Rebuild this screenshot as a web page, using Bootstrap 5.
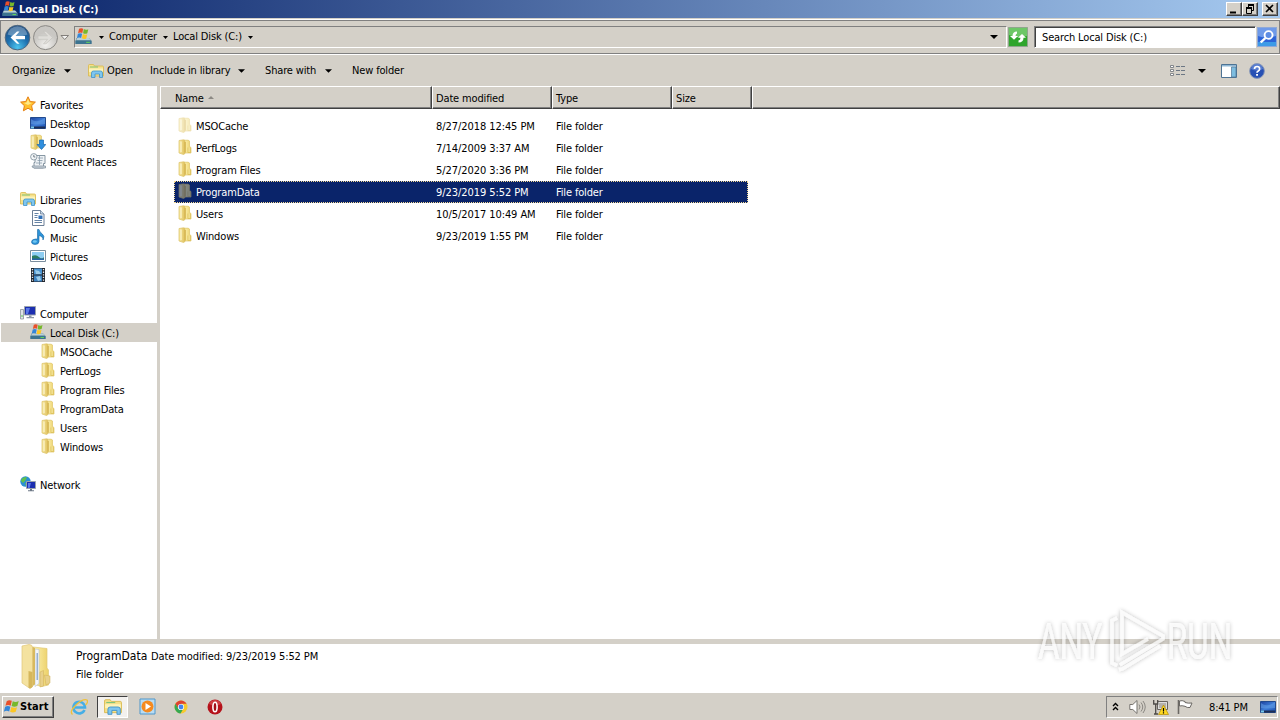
<!DOCTYPE html>
<html lang="en">
<head>
    <meta charset="UTF-8">
    <meta name="viewport" content="width=device-width, initial-scale=1.0">
    <title>Local Disk (C:)</title>
    <link rel="stylesheet" href="https://cdn.jsdelivr.net/npm/bootstrap@5.3.0/dist/css/bootstrap.min.css">
    <style>
        body {
            width: 1280px;
            height: 720px;
            overflow: hidden;
            background: #d4d0c8;
            color: #000;
            font-family: "DejaVu Sans Condensed", "DejaVu Sans", sans-serif;
            font-stretch: condensed;
            font-size: 11px;
            line-height: 14px;
            letter-spacing: -0.15px;
            white-space: nowrap;
        }
        svg { display: block; flex: none; }
        .titlebar {
            height: 18px;
            margin-bottom: 1px;
            padding: 0 2px;
            color: #fff;
            font-weight: bold;
            letter-spacing: -0.05px;
            background: linear-gradient(90deg, #0a246a, #a6caf0);
        }
        .title-text { padding: 1px 0 0 1px; }
        .win-btn {
            width: 16px;
            height: 14px;
            background: #d4d0c8;
            border: 1px solid;
            border-color: #fff #404040 #404040 #fff;
            box-shadow: inset -1px -1px #808080;
        }
        .address-row {
            height: 36px;
            padding: 0 2px 0 4px;
            border-top: 1px solid #fff;
            border-bottom: 1px solid #fff;
            box-shadow: inset 1px 1px #808080, inset -1px -1px #808080;
        }
        .sunken {
            height: 22px;
            border: 1px solid;
            border-color: #808080 #fff #fff #808080;
        }
        .crumbs { width: 933px; margin-left: 4px; }
        .crumbs .cr-1 { margin-left: 7px; }
        .crumb-pc { width: 54px; margin-left: 5px; }
        .crumb-disk { width: 75px; margin-left: 5px; }
        .refresh { margin-left: 1px; }
        .search-box {
            width: 222px;
            margin-left: 6px;
            padding: 2px 0 0 7px;
            background: #fff;
            box-shadow: inset 1px 1px #404040;
        }
        .search-btn { margin-left: 1px; }
        .toolbar { height: 31px; padding: 0 15px 0 12px; }
        .tb-organize { width: 52px; }
        .tb-icon { margin-left: 17px; }
        .tb-open { width: 43px; margin-left: 3px; }
        .tb-include { width: 88px; }
        .tb-share { width: 60px; margin-left: 20px; }
        .tb-new { margin-left: 20px; }
        .tb-preview { margin: 0 12px 0 15px; }
        .tb-views { margin-right: 12px; }
        .main-area { height: 553px; background: #fff; }
        .side {
            width: 160px;
            padding-top: 9px;
            border-right: 3px solid #d4d0c8;
        }
        .side-item { height: 19px; gap: 4px; padding: 2px 0 0 20px; }
        .side-item svg { margin-top: -3px; }
        .side-item.lv1 { padding-left: 30px; }
        .side-item.lv2 { padding-left: 40px; }
        .side-item.current { background: #d4d0c8; margin-left: 1px; padding-left: 29px; }
        .side-gap { height: 19px; }
        .heads { height: 23px; background: #d4d0c8; }
        .head-cell {
            padding: 2px 3px 0;
            border: 1px solid;
            border-color: #fff #404040 #404040 #fff;
            box-shadow: inset -1px -1px #808080;
        }
        .c-name { width: 272px; padding-left: 14px; }
        .c-mid { width: 120px; }
        .c-size { width: 80px; }
        .files { padding: 6px 0 0 14px; }
        .file-row { width: 574px; height: 22px; padding-top: 2px; }
        .file-row svg { margin-top: -4px; }
        .file-row .f-name { width: 262px; gap: 3px; padding-left: 3px; }
        .file-row .f-date { width: 120px; letter-spacing: -0.07px; }
        .file-row.picked {
            background: #0a246a;
            color: #fff;
            outline: 1px dotted #f5db95;
            outline-offset: -1px;
        }
        .splitter { height: 5px; background: #d4d0c8; }
        .details { height: 48px; background: #fff; padding-left: 20px; }
        .details-text { line-height: 18px; padding: 4px 0 0 20px; letter-spacing: -0.1px; }
        .d-name { font-size: 12px; line-height: 17px; width: 75px; letter-spacing: 0; }
        .taskbar { height: 28px; padding: 0 2px; border-top: 1px solid #fff; }
        .start-btn {
            width: 52px;
            height: 22px;
            font-weight: bold;
            letter-spacing: 0.1px;
            background: #d4d0c8;
            border: 1px solid;
            border-color: #fff #404040 #404040 #fff;
            box-shadow: inset -1px -1px #808080;
        }
        .start-btn span { padding-top: 1px; }
        .task-on {
            width: 31px;
            height: 22px;
            margin-left: 9px;
            background: #f3f1ee;
            border: 1px solid;
            border-color: #404040 #fff #fff #404040;
        }
        .task-ie { margin-left: 16px; }
        .task-wmp { margin-left: 11px; }
        .task-chrome { margin-left: 18px; }
        .task-opera { margin-left: 19px; }
        .tray { width: 172px; padding-left: 5px; }
        .tray-vol { margin-left: 10px; }
        .tray-net { margin-left: 7px; }
        .tray-flag { margin-left: 8px; }
        .tray-time { width: 51px; margin-left: 16px; padding-top: 2px; }
        .watermark { position: absolute; left: 1030px; top: 602px; overflow: visible; }
        .watermark text { font-family: Roboto, sans-serif; font-stretch: normal; font-size: 50px; letter-spacing: 0; }
    </style>
</head>
<body>
    <svg width="0" height="0" class="position-absolute">
        <defs>
            <linearGradient id="gold"><stop offset="0" stop-color="#fdf3b4"/><stop offset="1" stop-color="#ecd068"/></linearGradient>
            <linearGradient id="flap"><stop offset="0" stop-color="#f7e9a4"/><stop offset="1" stop-color="#dfc05a"/></linearGradient>
            <linearGradient id="screen" x2="1" y2="1"><stop offset="0" stop-color="#1c3f9c"/><stop offset=".5" stop-color="#3d7bd6"/><stop offset="1" stop-color="#1b4fae"/></linearGradient>
            <radialGradient id="orb" cx=".5" cy=".9" r=".9"><stop offset="0" stop-color="#4cc4ee"/><stop offset=".5" stop-color="#1d6fae"/><stop offset="1" stop-color="#1b4a80"/></radialGradient>
            <radialGradient id="orbOff" cx=".5" cy=".8"><stop offset="0" stop-color="#f2f1ef"/><stop offset="1" stop-color="#c9c7c3"/></radialGradient>
            <symbol id="flag" viewBox="0 0 16 16">
                <path d="M3.500 3q2.200-1.800 4.800-.3L7.200 7.200Q4.700 5.800 2.300 7.400z" fill="#e8502a"/>
                <path d="M9.200 3.100q2.600 1.500 5.600-.2l-1.300 4.600q-2.800 1.500-5.400 0z" fill="#77b82c"/>
                <path d="M2 8.300q2.500-1.500 4.900-.1L5.800 12.700Q3.300 11.300.8 12.900z" fill="#3386d8"/>
                <path d="M7.900 8.500q2.600 1.500 5.300.1L12 13q-2.700 1.500-5.300 0z" fill="#fbc624"/>
            </symbol>
            <symbol id="disk" viewBox="0 0 16 16">
                <path d="M1.500 9.500h11.500l2.500 2.500v3H.5v-3z" fill="#4f7f94"/>
                <path d="M2 9.500h11l2 2H1z" fill="#b9d0d8"/>
                <path d="M.5 12H15.500v3H.5z" fill="#3c7390"/>
                <path d="M10.500 13h3.500v1h-3.500z" fill="#62d15c"/>
                <path d="M3.800.8q2-1.200 3.900 0L6.900 4.700q-2-1-4 .2z" fill="#e8502a"/>
                <path d="M8.300 1q2 1.200 4.200.1l-.9 3.900q-2 1-4-.1z" fill="#77b82c"/>
                <path d="M2.700 5.500q2-1.200 4 0l-.9 4q-2-1-4 .1z" fill="#3386d8"/>
                <path d="M7.400 5.700q2 1.200 4.100.1l-.9 4q-2 1-4-.1z" fill="#fbc624"/>
            </symbol>
            <symbol id="folder" viewBox="0 0 16 16">
                <path d="M7 1.200Q12.500.8 12.500 2v5.500l1.500 1V14H7z" fill="url(#gold)" stroke="#dfc66a" stroke-width=".7"/>
                <path d="M2 1.500L6.500.8q1.500 0 1.500 1.500v12.200l-1.500 1L2 14z" fill="url(#flap)" stroke="#dcc266" stroke-width=".7"/>
                <path d="M8.200 3v10.500" stroke="#c9a23a" stroke-width=".8"/>
                <path d="M11 8.500v5h2.300V8.800" fill="#f6e69a" stroke="#d8bb55" stroke-width=".7"/>
                <path d="M4 2.500v10.500" stroke="#fdf6cf" stroke-width="1.200"/>
            </symbol>
            <symbol id="library" viewBox="0 0 16 16">
                <path d="M.5 2.500q0-1 1-1h4l1 1.500h8q1 0 1 1V13H.5z" fill="#f5e08a" stroke="#d8b84d" stroke-width=".8"/>
                <path d="M2 3.500h8v1H2z" fill="#7cc47d"/>
                <path d="M1 5.500h14V9H1z" fill="#fdf3b8"/>
                <path d="M3.500 14.500V10q0-2 2-2h7q2 0 2 2v4.500h-3V11h-4.500v3.500z" fill="#7fc6ef" stroke="#3f92c8" stroke-width=".8"/>
            </symbol>
            <symbol id="star" viewBox="0 0 16 16">
                <path d="M8 .8l2.200 4.700 5.200.6-3.800 3.600 1 5.100L8 12.200l-4.600 2.600 1-5.100L.6 6.100l5.200-.6z" fill="#ffc02e" stroke="#e57f14"/>
                <path d="M8 3l1.400 3.500L12 7 8 9 4 7l2.600-.5z" fill="#ffea8a"/>
            </symbol>
            <symbol id="desktop" viewBox="0 0 16 16">
                <path d="M.5 2.500h15v11H.5z" fill="url(#screen)" stroke="#234a8e"/>
                <path d="M1 4q6 5 14-1v6Q8 10 1 9z" fill="#6aa5ea" opacity=".5"/>
                <path d="M1 11.500h14v2H1z" fill="#1d2e55"/><path d="M1 11.500h3v2H1z" fill="#77c8ee"/>
            </symbol>
            <symbol id="download" viewBox="0 0 16 16">
                <use href="#folder" x="-1" width="16" height="16"/>
                <path d="M9.500 6h4v4.500h2.300L11.500 15.500 7 10.500h2.500z" fill="#2f8fdf" stroke="#1767b0" stroke-width=".7"/>
            </symbol>
            <symbol id="recent" viewBox="0 0 16 16">
                <path d="M5 2.500h10v8h-1.500V15H4V9.500h1z" fill="#eef2f5" stroke="#7b8b98" stroke-width=".9"/>
                <path d="M8 5h5M7.500 7.500h5M6 10h6M9.500 3v9" stroke="#8a9cab" stroke-width=".8"/>
                <circle cx="3.800" cy="3.800" r="3.200" fill="#f3f6f8" stroke="#8897a3" stroke-width=".9"/>
                <path d="M3.800 2v2h1.500" fill="none" stroke="#53616d" stroke-width=".8"/>
                <path d="M2 13q0 2 2.500 2H15.500v-2z" fill="#cbd5dc" stroke="#7b8b98" stroke-width=".7"/>
            </symbol>
            <symbol id="doc" viewBox="0 0 16 16">
                <path d="M2.500.5h8l3.500 3.500v11.500H2.500z" fill="#fff" stroke="#5b718b" stroke-width=".9"/>
                <path d="M10.500.5V4H14" fill="#c9d9e8" stroke="#5b718b" stroke-width=".7"/>
                <path d="M4.500 3.500h4M4.500 5.500h3M4.500 7.500h3M4.500 10.500h7.500M4.500 12.500h7.500" stroke="#6583a6"/>
                <path d="M8.500 5.500h4v3.500h-4z" fill="#2f6fb7"/>
            </symbol>
            <symbol id="music" viewBox="0 0 16 16">
                <path d="M7.500.5h1.500q.5 2.500 3 4.200 3.300 2.300 1 6.300.3-3.500-4-4.500v6q0 3-4 3-3.500-.1-3.500-2.500 0-2.700 4-3h2z" fill="#2d93d8" stroke="#1667a5" stroke-width=".6"/>
                <ellipse cx="4.800" cy="12.500" rx="2" ry="1.300" fill="#70c7f2"/>
            </symbol>
            <symbol id="picture" viewBox="0 0 16 16">
                <path d="M.5 2.500h15v11H.5z" fill="#fff" stroke="#7b8e9e"/>
                <path d="M2 4h12v8H2z" fill="#8ecdf2"/><path d="M2 8q4-2 7 1t5 0v3H2z" fill="#2d7d62"/><path d="M2 10.500h12V12H2z" fill="#2864a8"/>
            </symbol>
            <symbol id="video" viewBox="0 0 16 16">
                <path d="M1 1h14v14H1z" fill="#20252d"/>
                <path d="M4 1.500h8v6H4z" fill="#4a93cf"/><path d="M4 8.500h8v6H4z" fill="#3e83c0"/>
                <path d="M5 3l4 1 2 3H6zM6 10l4-1 1 4-3 1z" fill="#9bcce9"/>
                <path d="M2.500 2v13M13.500 2v13" stroke="#e9edf2" stroke-width="1.300" stroke-dasharray="1.300 1.300"/>
            </symbol>
            <symbol id="pc" viewBox="0 0 16 16">
                <path d="M.5 4.500h3v9.500h-3z" fill="#dfe3e6" stroke="#8c949b" stroke-width=".8"/><path d="M1.500 10h1v2h-1z" fill="#5cc94e"/>
                <path d="M4.500 1.500h11v8.500h-11z" fill="#1c2fb0" stroke="#9aa3ad"/>
                <path d="M6 3h4l-2 6H6z" fill="#5a78e8"/><path d="M9 10.500h2.500V12H14v1.200H6.500V12H9z" fill="#8d98a6"/>
            </symbol>
            <symbol id="network" viewBox="0 0 16 16">
                <circle cx="5.500" cy="5.500" r="5.200" fill="#2b8fd3"/>
                <path d="M2 2.500Q5 0 7 1.500L5 5 3 7 .8 4.800zM5 7l3 1-2 2.600z" fill="#5fc04e"/>
                <path d="M6.500 5.500h9v7h-9z" fill="#1c2fb0" stroke="#9aa3ad"/>
                <path d="M8 7h3l-1.500 5H8z" fill="#5a78e8"/><path d="M10 13h2v1.200h2v1H8v-1h2z" fill="#6d7886"/>
            </symbol>
            <symbol id="caret" viewBox="0 0 8 4"><path d="M0 0h8L4 4z"/></symbol>
        </defs>
    </svg>

    <div class="titlebar d-flex align-items-center">
        <svg width="16" height="16"><use href="#disk"/></svg>
        <span class="title-text me-auto">Local Disk (C:)</span>
        <div class="d-flex">
            <div class="win-btn"><svg width="14" height="12"><path d="M3 8.500h6v2H3z"/></svg></div>
            <div class="win-btn me-1"><svg width="14" height="12"><path d="M5 2h6M3 5h6" stroke="#000" stroke-width="2"/><path d="M5.500 2v3M10.500 2v5.500H9M3.500 5v5.500h5V5" fill="none" stroke="#000"/></svg></div>
            <div class="win-btn"><svg width="14" height="12"><path d="M3 2l7 7M10 2L3 9" stroke="#000" stroke-width="1.600"/></svg></div>
        </div>
    </div>

    <div class="address-row d-flex align-items-center">
        <svg width="66" height="30" viewBox="0 0 66 30">
            <circle cx="13.500" cy="15.600" r="12.300" fill="url(#orb)" stroke="#51687e"/>
            <path d="M3.500 12.500q2-8 10-8.300 8 .3 10 8.300-10 4-20 0z" fill="#fff" opacity=".3"/>
            <path d="M6.500 15.600l6.500-6.200h2.500l-4 4.500h9.500v3.400h-9.500l4 4.500H13z" fill="#fff"/>
            <circle cx="41.500" cy="15.600" r="12" fill="url(#orbOff)" stroke="#8b8985"/>
            <path d="M48.500 15.600L42 9.400h-2.500l4 4.500H34v3.400h9.500l-4 4.500H42z" fill="#dfddd9" stroke="#c3c1bc" stroke-width=".6"/>
            <path d="M57 13.500h7.500L60.700 17.500z" fill="#f4f3f1" stroke="#77746f" stroke-width=".9"/>
        </svg>
        <div class="sunken crumbs d-flex align-items-center">
            <svg width="17" height="18"><use href="#disk" width="17" height="17"/></svg>
            <svg class="cr-1" width="5" height="3" viewBox="0 0 5 3"><path d="M0 0h5L2.500 3z"/></svg>
            <span class="crumb-pc">Computer</span>
            <svg width="5" height="3" viewBox="0 0 5 3"><path d="M0 0h5L2.500 3z"/></svg>
            <span class="crumb-disk">Local Disk (C:)</span>
            <svg width="5" height="3" viewBox="0 0 5 3"><path d="M0 0h5L2.500 3z"/></svg>
            <svg class="ms-auto me-2" width="8" height="4"><use href="#caret"/></svg>
        </div>
        <svg class="refresh" width="20" height="20" viewBox="0 0 20 20">
            <path d="M.5.500h19v19H.5z" fill="#2fa52c" stroke="#8fa68d"/><path d="M1 1h18v8Q9 12 1 8z" fill="#8fd987" opacity=".65"/>
            <path d="M2 9h2.500Q4.500 4.500 9 4.500v2Q7.500 7 7.500 9H10L6 12.800zM18 10.800h-2.500q0 4.700-5 4.700v-2q2-.3 2-2.700H10L14 7z" fill="#fff"/>
        </svg>
        <div class="sunken search-box d-flex align-items-center">Search Local Disk (C:)</div>
        <svg class="search-btn" width="20" height="20" viewBox="0 0 19 20" preserveAspectRatio="none">
            <path d="M.5.500h18v19H.5z" fill="#2c63d8" stroke="#8fa9d8"/><path d="M1 1h17v8Q9 12 1 9z" fill="#9cc0f5" opacity=".6"/><path d="M1 15h17v4H1z" fill="#49c2f2" opacity=".6"/>
            <circle cx="11" cy="8" r="3.800" fill="#5d8ce4" stroke="#fff" stroke-width="1.800"/><path d="M8 11l-4.500 4.500" stroke="#fff" stroke-width="2.400"/>
        </svg>
    </div>

    <div class="toolbar d-flex align-items-center">
        <span class="tb-organize">Organize</span>
        <svg width="7" height="4"><use href="#caret"/></svg>
        <svg class="tb-icon" width="16" height="16"><use href="#library"/></svg>
        <span class="tb-open">Open</span>
        <span class="tb-include">Include in library</span>
        <svg width="7" height="4"><use href="#caret"/></svg>
        <span class="tb-share">Share with</span>
        <svg width="7" height="4"><use href="#caret"/></svg>
        <span class="tb-new">New folder</span>
        <div class="d-flex align-items-center ms-auto">
            <svg class="tb-views" width="16" height="14" viewBox="0 0 16 14"><path d="M.5 1.500h3v2h-3zM.5 5.500h3v2h-3zM.5 9.500h3v2h-3z" fill="#fff" stroke="#777b80" stroke-width=".9"/><path d="M6 2.500h4M11 2.500h4M6 6.500h4M11 6.500h4M6 10.500h4M11 10.500h4" stroke="#6c7784" stroke-width="1.200"/></svg>
            <svg width="8" height="4"><use href="#caret"/></svg>
            <svg class="tb-preview" width="16" height="14" viewBox="0 0 16 14"><path d="M.5.500h15v13H.5z" fill="#fff" stroke="#4d7394"/><path d="M1 1h14v1.500H1z" fill="#8fb7d4"/><path d="M10.500 3h4.500v10h-4.500z" fill="#7dbde0" stroke="#4d7394" stroke-width=".7"/></svg>
            <svg width="16" height="16" viewBox="0 0 16 16"><circle cx="8" cy="8" r="7.400" fill="#2750b4" stroke="#8b9ab8"/><path d="M2 6q1-5 6-5t6 5Q8 9 2 6z" fill="#88a7ea" opacity=".5"/><path d="M5.500 6q0-2.500 2.600-2.500T10.600 6q0 1.300-1.300 2T8 9.800" fill="none" stroke="#fff" stroke-width="1.700"/><path d="M7.100 11h1.900v1.800H7.100z" fill="#fff"/></svg>
        </div>
    </div>

    <div class="main-area d-flex">
        <div class="side">
            <div class="side-item d-flex align-items-center"><svg width="16" height="16"><use href="#star"/></svg>Favorites</div>
            <div class="side-item lv1 d-flex align-items-center"><svg width="16" height="16"><use href="#desktop"/></svg>Desktop</div>
            <div class="side-item lv1 d-flex align-items-center"><svg width="16" height="16"><use href="#download"/></svg>Downloads</div>
            <div class="side-item lv1 d-flex align-items-center"><svg width="16" height="16"><use href="#recent"/></svg>Recent Places</div>
            <div class="side-gap"></div>
            <div class="side-item d-flex align-items-center"><svg width="16" height="16"><use href="#library"/></svg>Libraries</div>
            <div class="side-item lv1 d-flex align-items-center"><svg width="16" height="16"><use href="#doc"/></svg>Documents</div>
            <div class="side-item lv1 d-flex align-items-center"><svg width="16" height="16"><use href="#music"/></svg>Music</div>
            <div class="side-item lv1 d-flex align-items-center"><svg width="16" height="16"><use href="#picture"/></svg>Pictures</div>
            <div class="side-item lv1 d-flex align-items-center"><svg width="16" height="16"><use href="#video"/></svg>Videos</div>
            <div class="side-gap"></div>
            <div class="side-item d-flex align-items-center"><svg width="16" height="16"><use href="#pc"/></svg>Computer</div>
            <div class="side-item current d-flex align-items-center"><svg width="16" height="16"><use href="#disk"/></svg>Local Disk (C:)</div>
            <div class="side-item lv2 d-flex align-items-center"><svg width="16" height="16"><use href="#folder"/></svg>MSOCache</div>
            <div class="side-item lv2 d-flex align-items-center"><svg width="16" height="16"><use href="#folder"/></svg>PerfLogs</div>
            <div class="side-item lv2 d-flex align-items-center"><svg width="16" height="16"><use href="#folder"/></svg>Program Files</div>
            <div class="side-item lv2 d-flex align-items-center"><svg width="16" height="16"><use href="#folder"/></svg>ProgramData</div>
            <div class="side-item lv2 d-flex align-items-center"><svg width="16" height="16"><use href="#folder"/></svg>Users</div>
            <div class="side-item lv2 d-flex align-items-center"><svg width="16" height="16"><use href="#folder"/></svg>Windows</div>
            <div class="side-gap"></div>
            <div class="side-item d-flex align-items-center"><svg width="16" height="16"><use href="#network"/></svg>Network</div>
        </div>
        <div class="flex-grow-1">
            <div class="heads d-flex">
                <div class="head-cell c-name d-flex align-items-center">Name<svg class="ms-1 mb-1" width="7" height="4" viewBox="0 0 7 4"><path d="M0 4h6L3 1z" fill="#8c8984"/></svg></div>
                <div class="head-cell c-mid d-flex align-items-center">Date modified</div>
                <div class="head-cell c-mid d-flex align-items-center">Type</div>
                <div class="head-cell c-size d-flex align-items-center">Size</div>
                <div class="head-cell flex-grow-1"></div>
            </div>
            <div class="files">
                <div class="file-row d-flex align-items-center"><div class="f-name d-flex align-items-center"><svg class="opacity-50" width="16" height="16"><use href="#folder"/></svg>MSOCache</div><div class="f-date">8/27/2018 12:45 PM</div><div>File folder</div></div>
                <div class="file-row d-flex align-items-center"><div class="f-name d-flex align-items-center"><svg width="16" height="16"><use href="#folder"/></svg>PerfLogs</div><div class="f-date">7/14/2009 3:37 AM</div><div>File folder</div></div>
                <div class="file-row d-flex align-items-center"><div class="f-name d-flex align-items-center"><svg width="16" height="16"><use href="#folder"/></svg>Program Files</div><div class="f-date">5/27/2020 3:36 PM</div><div>File folder</div></div>
                <div class="file-row picked d-flex align-items-center"><div class="f-name d-flex align-items-center"><svg class="opacity-50" width="16" height="16"><use href="#folder"/></svg>ProgramData</div><div class="f-date">9/23/2019 5:52 PM</div><div>File folder</div></div>
                <div class="file-row d-flex align-items-center"><div class="f-name d-flex align-items-center"><svg width="16" height="16"><use href="#folder"/></svg>Users</div><div class="f-date">10/5/2017 10:49 AM</div><div>File folder</div></div>
                <div class="file-row d-flex align-items-center"><div class="f-name d-flex align-items-center"><svg width="16" height="16"><use href="#folder"/></svg>Windows</div><div class="f-date">9/23/2019 1:55 PM</div><div>File folder</div></div>
            </div>
        </div>
    </div>

    <div class="splitter"></div>
    <div class="details d-flex">
        <svg width="36" height="46" viewBox="0 0 36 46">
            <path d="M13 3l14 1.500V24l1.500 2v15l-7 1.500L13 40z" fill="url(#gold)" stroke="#e0c878" stroke-width=".7"/>
            <path d="M15 5l4 .5v34l-4 3z" fill="#f5f7fa" stroke="#b9c2cc" stroke-width=".6"/><path d="M17.200 9v27" stroke="#7f9dc4" stroke-width="1.200"/>
            <path d="M11 2l4 2v36l-4 4z" fill="#d8b95e"/>
            <path d="M2 2L9 .5q3.500 0 3.500 3v39L10 44.500 2 39z" fill="#f4e2a0" stroke="#dfc57a" stroke-width=".7"/>
            <path d="M8.500 27l4 1v15l-2.500 1.500-1.500-1z" fill="#d6b75c"/>
            <path d="M20 28l3.500-1.500V42L20 43zM24.500 31l5.500 1v7l-4 2z" fill="#e8d08a" stroke="#cfae55" stroke-width=".5"/>
        </svg>
        <div class="details-text">
            <div class="d-flex"><span class="d-name">ProgramData</span><span>Date modified: 9/23/2019 5:52 PM</span></div>
            <div>File folder</div>
        </div>
    </div>

    <div class="taskbar d-flex align-items-center">
        <div class="start-btn d-flex align-items-center"><svg width="17" height="17"><use href="#flag"/></svg><span>Start</span></div>
        <svg class="task-ie" width="18" height="18" viewBox="0 0 18 18">
            <path d="M14.500 12A5.800 5.800 0 1 1 15 9.500H5" fill="none" stroke="#45aee6" stroke-width="2.600"/>
            <path d="M2.500 16.500Q-1 13.500 6 7T17 2q1.500 2-1.500 5" fill="none" stroke="#efc13a" stroke-width="1.300"/>
        </svg>
        <div class="task-on d-flex align-items-center justify-content-center"><svg width="18" height="18"><use href="#library" width="18" height="18"/></svg></div>
        <svg class="task-wmp" width="17" height="17" viewBox="0 0 17 17"><path d="M1 1h15v15H1z" fill="#b9dcf3" stroke="#4f97cb"/><circle cx="8.500" cy="8.500" r="6" fill="#f58a1f"/><path d="M6.500 5l5.500 3.500L6.500 12z" fill="#fff"/></svg>
        <svg class="task-chrome" width="14" height="14" viewBox="0 0 14 14">
            <circle cx="7" cy="7" r="6.500" fill="#f7ca2e"/><path d="M1.400 3.800a6.500 6.500 0 0 1 11.200 0H7L4 8.500z" fill="#de4232"/><path d="M1.400 3.800A6.500 6.500 0 0 0 6.500 13.500L9.500 8.500H4.300z" fill="#35a853"/>
            <circle cx="7" cy="7" r="3.100" fill="#fff"/><circle cx="7" cy="7" r="2.400" fill="#4384ef"/>
        </svg>
        <svg class="task-opera" width="16" height="16" viewBox="0 0 16 16"><circle cx="8" cy="8" r="7.500" fill="#b5121b"/><path d="M2 5q2-4 6-4t6 4Q8 8 2 5z" fill="#e86a6a" opacity=".5"/><ellipse cx="8" cy="8" rx="2.100" ry="4.800" fill="#a30f17" stroke="#fff" stroke-width="1.600"/></svg>
        <div class="tray sunken d-flex align-items-center ms-auto">
            <svg width="7" height="9" viewBox="0 0 7 9"><path d="M1 4l2.500-2.500L6 4M1 8l2.500-2.500L6 8" fill="none" stroke="#000" stroke-width="1.400"/></svg>
            <svg class="tray-vol" width="17" height="16" viewBox="0 0 17 16"><path d="M.8 5.500h3L8 1.500v13l-4.200-4h-3z" fill="#fff" stroke="#77746f"/><path d="M10 5.500q2 2.500 0 5M12 3.500q3.500 4.500 0 9M14 2q4.500 6 0 12" fill="none" stroke="#8b8883"/></svg>
            <svg class="tray-net" width="16" height="16" viewBox="0 0 16 16"><path d="M4.500 2.500h10v8h-10z" fill="#dedede" stroke="#67635f"/><path d="M6 4h7v5H6z" fill="#b5b2ad"/><path d="M.7 1v4h4V1M2.700 5v10M1 15h4" fill="none" stroke="#4e4b48" stroke-width="1.300"/><path d="M10.500 6l5 9.500h-10z" fill="#ffd820" stroke="#b58c00" stroke-width=".7"/><path d="M10.500 9v3.500M10.500 13.200v1.300" stroke="#000" stroke-width="1.200"/></svg>
            <svg class="tray-flag" width="16" height="16" viewBox="0 0 16 16"><path d="M1.500 1v14" stroke="#6b6864" stroke-width="1.600"/><path d="M2.500 2Q5 1 8 2.500v1q3 1 7 .5l-2 4.500q-3 .5-5-1.200-3-1-5.500-.3z" fill="#fff" stroke="#6b6864"/></svg>
            <span class="tray-time">8:41 PM</span>
            <svg width="16" height="16"><use href="#desktop"/></svg>
        </div>
    </div>

    <svg class="watermark" width="240" height="80" viewBox="0 0 240 80">
        <defs><filter id="soft" filterUnits="userSpaceOnUse" x="-10" y="-10" width="250" height="100"><feDropShadow dx="0" dy="0" stdDeviation="2.200" flood-color="#000" flood-opacity=".36"/></filter></defs>
        <g filter="url(#soft)" fill="#fff" fill-opacity=".7">
            <g transform="translate(8 57) scale(.66 1)"><text>ANY</text></g>
            <g transform="translate(137 57) scale(.66 1)"><text>RUN</text></g>
            <path d="M118 37L92 52V10.500l41 23.500v3L90 63M87 16l-5 2.500V61l5 2.500M89 67.500l3-.5 38-23" fill="none" stroke="#fff" stroke-opacity=".75" stroke-width="3.500"/>
        </g>
    </svg>
    <script src="https://cdn.jsdelivr.net/npm/bootstrap@5.3.0/dist/js/bootstrap.bundle.min.js"></script>
</body>
</html>
